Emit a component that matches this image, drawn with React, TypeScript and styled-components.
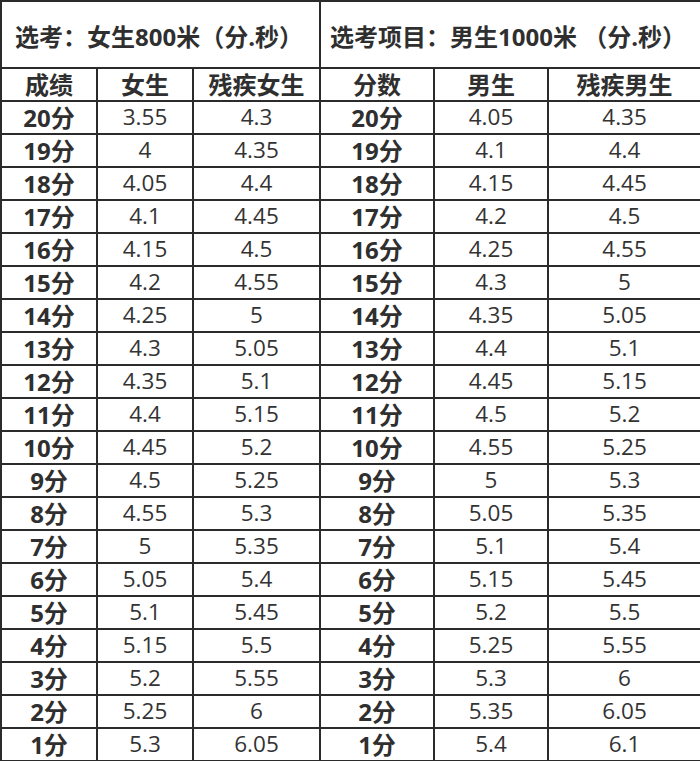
import styled, { createGlobalStyle } from 'styled-components';

const GlobalStyle = createGlobalStyle`
     html, body {
          margin: 0;
          padding: 0;
          background: #fff;
     }
     body {
          font-family: 'Open Sans', 'Noto Sans CJK SC', sans-serif;
          color: #333;
     }
`;

const Table = styled.table`
     width: 700px;
     border-collapse: collapse;
     table-layout: fixed;
     border: 2px solid #2b2b2b;
     td,
     th {
          border: 2px solid #2b2b2b;
          padding: 0;
          line-height: 1;
          box-sizing: border-box;
     }
`;

const TitleCell = styled.th<{ $pad: number }>`
     height: 67px;
     text-align: left;
     padding-left: ${(p) => p.$pad}px !important;
     padding-top: 4px !important;
     font-size: 24px;
     font-weight: 700;
     white-space: nowrap;
     color: #2f2f2f;
`;

const HeadCell = styled.th`
     height: 33px;
     font-size: 24px;
     font-weight: 700;
     text-align: center;
     color: #2f2f2f;
`;

const ScoreCell = styled.td`
     height: 33px;
     font-size: 24px;
     font-weight: 700;
     text-align: center;
     color: #2f2f2f;
`;

const ValueCell = styled.td`
     font-size: 22.5px;
     font-weight: 400;
     text-align: center;
     color: #333;
`;

type Row = [string, string];

const girls: Row[] = [
     ['3.55', '4.3'],
     ['4', '4.35'],
     ['4.05', '4.4'],
     ['4.1', '4.45'],
     ['4.15', '4.5'],
     ['4.2', '4.55'],
     ['4.25', '5'],
     ['4.3', '5.05'],
     ['4.35', '5.1'],
     ['4.4', '5.15'],
     ['4.45', '5.2'],
     ['4.5', '5.25'],
     ['4.55', '5.3'],
     ['5', '5.35'],
     ['5.05', '5.4'],
     ['5.1', '5.45'],
     ['5.15', '5.5'],
     ['5.2', '5.55'],
     ['5.25', '6'],
     ['5.3', '6.05'],
];

const boys: Row[] = [
     ['4.05', '4.35'],
     ['4.1', '4.4'],
     ['4.15', '4.45'],
     ['4.2', '4.5'],
     ['4.25', '4.55'],
     ['4.3', '5'],
     ['4.35', '5.05'],
     ['4.4', '5.1'],
     ['4.45', '5.15'],
     ['4.5', '5.2'],
     ['4.55', '5.25'],
     ['5', '5.3'],
     ['5.05', '5.35'],
     ['5.1', '5.4'],
     ['5.15', '5.45'],
     ['5.2', '5.5'],
     ['5.25', '5.55'],
     ['5.3', '6'],
     ['5.35', '6.05'],
     ['5.4', '6.1'],
];

export default function App() {
     return (
          <>
               <GlobalStyle />
               <Table>
                    <colgroup>
                         <col style={{ width: 96 }} />
                         <col style={{ width: 96 }} />
                         <col style={{ width: 127 }} />
                         <col style={{ width: 114 }} />
                         <col style={{ width: 114 }} />
                         <col style={{ width: 153 }} />
                    </colgroup>
                    <thead>
                         <tr>
                              <TitleCell colSpan={3} $pad={13}>
                                   选考：女生800米（分.秒）
                              </TitleCell>
                              <TitleCell colSpan={3} $pad={9}>
                                   选考项目：男生1000米 （分.秒）
                              </TitleCell>
                         </tr>
                         <tr>
                              <HeadCell>成绩</HeadCell>
                              <HeadCell>女生</HeadCell>
                              <HeadCell>残疾女生</HeadCell>
                              <HeadCell>分数</HeadCell>
                              <HeadCell>男生</HeadCell>
                              <HeadCell>残疾男生</HeadCell>
                         </tr>
                    </thead>
                    <tbody>
                         {girls.map((g, i) => {
                              const score = `${20 - i}分`;
                              const b = boys[i];
                              return (
                                   <tr key={score}>
                                        <ScoreCell>{score}</ScoreCell>
                                        <ValueCell>{g[0]}</ValueCell>
                                        <ValueCell>{g[1]}</ValueCell>
                                        <ScoreCell>{score}</ScoreCell>
                                        <ValueCell>{b[0]}</ValueCell>
                                        <ValueCell>{b[1]}</ValueCell>
                                   </tr>
                              );
                         })}
                    </tbody>
               </Table>
          </>
     );
}
